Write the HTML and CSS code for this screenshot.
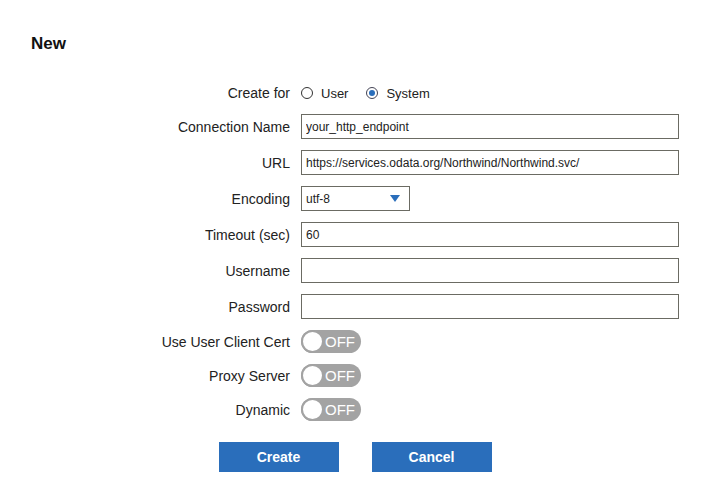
FILE: index.html
```html
<!DOCTYPE html>
<html lang="en">
<head>
    <meta charset="UTF-8">
    <meta name="viewport" content="width=device-width, initial-scale=1.0">
    <title>New Connection</title>
    <link rel="stylesheet" href="styles.css">
</head>
<body>
    <div class="page">
        <h1 class="title">New</h1>

        <!-- Connection form -->
        <form class="conn-form">
            <label class="field-label">Create for</label>
            <div class="radio-group">
                <span class="radio-item"><span class="radio"></span>User</span>
                <span class="radio-item"><span class="radio checked"></span>System</span>
            </div>

            <label class="field-label">Connection Name</label>
            <input type="text" class="text-input" value="your_http_endpoint">

            <label class="field-label">URL</label>
            <input type="text" class="text-input" value="https://services.odata.org/Northwind/Northwind.svc/">

            <label class="field-label">Encoding</label>
            <div class="select-box">
                <span>utf-8</span>
                <span class="select-arrow"></span>
            </div>

            <label class="field-label">Timeout (sec)</label>
            <input type="text" class="text-input" value="60">

            <label class="field-label">Username</label>
            <input type="text" class="text-input" value="">

            <label class="field-label">Password</label>
            <input type="password" class="text-input" value="">

            <label class="field-label">Use User Client Cert</label>
            <div class="toggle"><span class="knob"></span><span class="toggle-text">OFF</span></div>

            <label class="field-label">Proxy Server</label>
            <div class="toggle"><span class="knob"></span><span class="toggle-text">OFF</span></div>

            <label class="field-label">Dynamic</label>
            <div class="toggle"><span class="knob"></span><span class="toggle-text">OFF</span></div>
        </form>

        <div class="actions">
            <button class="button-primary">Create</button>
            <button class="button-primary">Cancel</button>
        </div>
    </div>
</body>
</html>
```

FILE: styles.css
```css
/* General Styles */
* {
    box-sizing: border-box;
}

html, body {
    margin: 0;
    font-family: "Liberation Sans", Arial, sans-serif;
    background-color: #ffffff;
    color: #222;
    font-size: 14px;
}

.page {
    padding: 34px 0 0 0;
}

.title {
    margin: 0 0 0 31px;
    font-size: 17px;
    line-height: 20px;
    font-weight: bold;
    color: #111;
}

/* Form */
.conn-form {
    display: grid;
    grid-template-columns: 290px 378px;
    column-gap: 11px;
    row-gap: 11px;
    margin-top: 29px;
    align-items: center;
}

.field-label {
    text-align: right;
    font-size: 14px;
    line-height: 16px;
}

.radio-group {
    display: flex;
    align-items: center;
    height: 20px;
    font-size: 13px;
}

.radio-item {
    display: flex;
    align-items: center;
    gap: 8px;
    margin-right: 18px;
}

.radio {
    width: 12px;
    height: 12px;
    border: 1px solid #333;
    border-radius: 50%;
    display: flex;
    align-items: center;
    justify-content: center;
}

.radio.checked {
    border-color: #445;
}

.radio.checked::after {
    content: "";
    width: 6px;
    height: 6px;
    border-radius: 50%;
    background: #2a6ebb;
}

.text-input {
    height: 25px;
    width: 100%;
    padding: 0 4px;
    border: 1px solid #6b6b63;
    border-radius: 0;
    font-family: "Liberation Sans", Arial, sans-serif;
    font-size: 12px;
    color: #222;
    outline: none;
}

.select-box {
    width: 109px;
    height: 25px;
    border: 1px solid #6b6b63;
    display: flex;
    align-items: center;
    justify-content: space-between;
    padding: 0 9px 0 4px;
    font-size: 12px;
}

.select-arrow {
    width: 0;
    height: 0;
    border-left: 5px solid transparent;
    border-right: 5px solid transparent;
    border-top: 7px solid #2a6ebb;
}

/* Toggles */
.toggle {
    width: 60px;
    height: 23px;
    border-radius: 12px;
    background: #a3a3a3;
    display: flex;
    align-items: center;
}

.knob {
    width: 23px;
    height: 23px;
    border-radius: 50%;
    background: #fff;
    border: 2px solid #a3a3a3;
}

.toggle-text {
    color: #fff;
    font-size: 15px;
    margin-left: 1px;
}

/* Buttons */
.actions {
    display: flex;
    justify-content: center;
    gap: 33px;
    margin-top: 21px;
}

.button-primary {
    width: 120px;
    height: 30px;
    background-color: #2a6ebb;
    color: white;
    border: none;
    font-family: "Liberation Sans", Arial, sans-serif;
    font-size: 14px;
    font-weight: bold;
    cursor: pointer;
}
```
